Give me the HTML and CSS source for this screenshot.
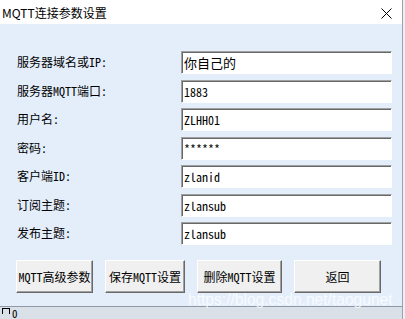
FILE: index.html
```html
<!DOCTYPE html>
<html lang="zh">
<head>
    <meta charset="UTF-8">
    <meta name="viewport" content="width=device-width, initial-scale=1.0">
    <title>MQTT连接参数设置</title>
    <link rel="stylesheet" href="styles.css">
</head>
<body>

    <div class="ventana">
        <div class="barra-titulo">
            <span class="titulo">MQTT连接参数设置</span>
            <svg class="cerrar" width="11" height="11" viewBox="0 0 11 11">
                <path d="M0.5 0.5 L10.5 10.5 M10.5 0.5 L0.5 10.5" stroke="#000" stroke-width="1" fill="none"/>
            </svg>
        </div>

        <div class="contenido">
            <form class="campos">
                <label for="host">服务器域名或IP:</label>
                <input type="text" id="host" class="clase-input cjk" value="你自己的">
                <label for="puerto">服务器MQTT端口:</label>
                <input type="text" id="puerto" class="clase-input" value="1883">
                <label for="usuario">用户名:</label>
                <input type="text" id="usuario" class="clase-input" value="ZLHH01">
                <label for="clave">密码:</label>
                <input type="text" id="clave" class="clase-input" value="******">
                <label for="cliente">客户端ID:</label>
                <input type="text" id="cliente" class="clase-input" value="zlanid">
                <label for="sub">订阅主题:</label>
                <input type="text" id="sub" class="clase-input" value="zlansub">
                <label for="pub">发布主题:</label>
                <input type="text" id="pub" class="clase-input" value="zlansub">
            </form>

            <div class="botones">
                <button type="button" class="b1">MQTT高级参数</button>
                <button type="button" class="b2">保存MQTT设置</button>
                <button type="button" class="b3">删除MQTT设置</button>
                <button type="button" class="b4">返回</button>
            </div>

            <div class="marca">https://blog.csdn.net/taogunet</div>
        </div>

        <div class="pie"><span class="caja"></span> 0</div>
    </div>

</body>
</html>
```

FILE: styles.css
```css
body {
    margin: 0;
    background-color: #eceff3;
    font-family: "Noto Sans Mono CJK SC", "Noto Sans CJK SC", monospace;
    font-size: 12px;
    overflow: hidden;
}
.ventana {
    width: 402px;
    height: 319px;
    border-right: 1px solid #9aa3ad;
    display: flex;
    flex-direction: column;
}
.barra-titulo {
    height: 25px;
    background-color: #ffffff;
    display: flex;
    align-items: center;
    justify-content: space-between;
    padding: 0 10px 0 2px;
    font-family: "Noto Sans CJK SC", sans-serif;
    font-size: 12px;
    color: #000;
}
.cerrar {
    margin-top: 2px;
}
.contenido {
    position: relative;
    height: 288px;
    box-sizing: border-box;
    background-color: #e4eefb;
    padding: 27px 0 0 17px;
}
.campos {
    display: grid;
    grid-template-columns: 164px 211px;
    row-gap: 5.45px;
    align-items: center;
}
.campos label {
    color: #000;
    line-height: 23px;
    margin-top: -2px;
}
.clase-input {
    height: 23px;
    box-sizing: border-box;
    margin: 0;
    padding: 0 0 0 2px;
    border: 1px solid;
    border-color: #a0a0a0 #ffffff #ffffff #a0a0a0;
    box-shadow: inset 1px 1px 0 #696969;
    background-color: #ffffff;
    font-family: "Noto Sans Mono CJK SC", "Noto Sans CJK SC", monospace;
    font-size: 12px;
    color: #000;
}
.clase-input.cjk {
    font-family: "Noto Sans CJK SC", sans-serif;
    font-size: 13px;
}
.botones {
    display: flex;
    gap: 12px;
    margin: 15px 0 0 -1px;
}
.botones button {
    height: 33px;
    box-sizing: border-box;
    padding: 0;
    border: 1px solid;
    border-color: #ffffff #696969 #696969 #ffffff;
    box-shadow: inset -1px -1px 0 #a0a0a0;
    background-color: #f0f0f0;
    font-family: "Noto Sans Mono CJK SC", "Noto Sans CJK SC", monospace;
    font-size: 12px;
    color: #000;
}
.b1 { width: 77px; }
.b2 { width: 80px; }
.b3 { width: 85px; }
.b4 { width: 87px; }
.marca {
    position: absolute;
    left: 188px;
    top: 267px;
    font-family: "Liberation Sans", Arial, sans-serif;
    font-size: 15.6px;
    line-height: 18px;
    color: rgba(255, 255, 255, 0.75);
    white-space: nowrap;
}
.pie {
    flex: 1;
    border-top: 1px solid #8f9aa6;
    background-color: #d9e0e8;
    font-size: 11px;
    line-height: 12px;
    padding-left: 2px;
    display: flex;
    align-items: flex-start;
    gap: 2px;
}
.caja {
    display: inline-block;
    width: 6px;
    height: 5px;
    margin-top: 1px;
    border: 1px solid #000;
    border-bottom: none;
}
```
